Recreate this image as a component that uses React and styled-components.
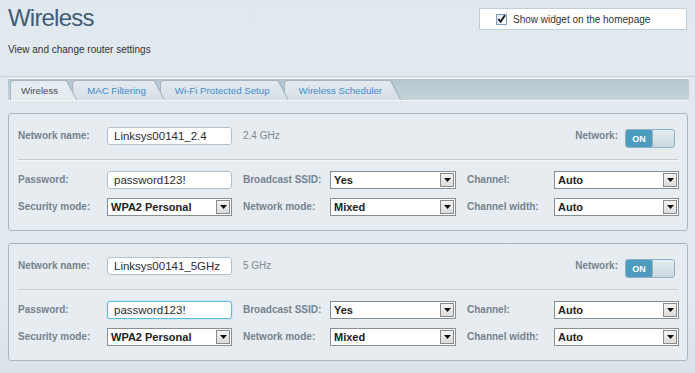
import React from "react";
import styled, { createGlobalStyle } from "styled-components";

const GlobalStyle = createGlobalStyle`
  html, body {
    margin: 0;
    padding: 0;
    background: #e1e9ef;
    font-family: "Liberation Sans", Arial, sans-serif;
  }
`;

const Page = styled.div`
  width: 695px;
  height: 373px;
  overflow: hidden;
  background: linear-gradient(180deg, #e1e9ef 0%, #e2eaef 80%, #d9e2e8 100%);
`;

const Header = styled.div`
  height: 77px;
  display: flex;
  justify-content: space-between;
  align-items: flex-start;
  padding: 0 8px;
  box-sizing: border-box;
  border-bottom: 1px solid #c7d2da;
`;

const TitleBlock = styled.div`
  padding-top: 4px;
`;

const Title = styled.h1`
  margin: 0;
  font-size: 24px;
  line-height: 28px;
  font-weight: normal;
  letter-spacing: -0.8px;
  color: #3e5c77;
`;

const Subtitle = styled.div`
  margin-top: 11px;
  font-size: 10px;
  line-height: 13px;
  color: #333;
`;

const WidgetBox = styled.label`
  margin-top: 8px;
  width: 208px;
  height: 22px;
  box-sizing: border-box;
  background: #fff;
  border: 1px solid #c3cfd8;
  display: flex;
  align-items: center;
  padding-left: 16px;
  gap: 6px;
  font-size: 10px;
  color: #333;
`;

const Check = styled.span`
  width: 11px;
  height: 11px;
  box-sizing: border-box;
  border: 1px solid #7f9db9;
  background: linear-gradient(135deg, #dfe4ea, #fff);
  display: flex;
  align-items: center;
  justify-content: center;
`;

const TabStrip = styled.div`
  margin: 1px 6px 0 8px;
  height: 23px;
  display: flex;
  align-items: flex-end;
  padding-left: 2px;
  background: linear-gradient(180deg, #b5c6d0 0%, #c6d3db 100%);
  border-top: 1px solid #f4f7f9;
  border-bottom: 1px solid #f2f6f8;
  box-sizing: border-box;
`;

const Tab = styled.div`
  position: relative;
  height: 20px;
  padding: 0 19px 0 ${(p) => (p.$active ? 11 : 15)}px;
  margin-left: ${(p) => (p.$first ? 0 : -5)}px;
  z-index: ${(p) => (p.$active ? 10 : 5 - p.$index)};
  display: flex;
  align-items: center;
  font-size: 9.7px;
  color: ${(p) => (p.$active ? "#4a4f55" : "#3f8ccb")};
  background: #a4b5c0;
  border-radius: 4px 0 0 0;
  clip-path: polygon(0 0, calc(100% - 10px) 0, 100% 100%, 0 100%);

  &::before {
    content: "";
    position: absolute;
    inset: 1px 1px 0 1px;
    border-radius: 3px 0 0 0;
    clip-path: polygon(0 0, calc(100% - 10px) 0, 100% 100%, 0 100%);
    background: ${(p) =>
      p.$active
        ? "#e5ecf0"
        : "linear-gradient(180deg, #e3eaee 0%, #d6e0e6 100%)"};
  }

  span {
    position: relative;
  }
`;

const Content = styled.div`
  padding: 12px 7px 0 8px;
  display: flex;
  flex-direction: column;
  gap: 12px;
`;

const Panel = styled.div`
  border: 1px solid #a9b6bf;
  border-radius: 3px;
  background: #e6ecf0;
  padding: 13px 9px 14px 9px;
`;

const TopRow = styled.div`
  display: flex;
  align-items: flex-start;
  height: 18px;
`;

const Label = styled.div`
  font-size: 10px;
  font-weight: bold;
  color: #75838e;
  white-space: nowrap;
  padding-left: ${(p) => p.$indent || 0}px;
  line-height: 18px;
`;

const NameLabel = styled(Label)`
  width: 89px;
`;

const Freq = styled.div`
  margin-left: 11px;
  font-size: 10px;
  line-height: 18px;
  color: #7d8a93;
`;

const Spacer = styled.div`
  flex: 1;
`;

const Toggle = styled.div`
  margin: 2px 3px 0 7px;
  width: 50px;
  height: 19px;
  display: flex;
  border-radius: 3px;
  overflow: hidden;
  box-sizing: border-box;
  border: 1px solid #8fb0c2;
`;

const ToggleOn = styled.div`
  width: 26px;
  background: #4c9cc0;
  color: #fff;
  font-size: 9px;
  font-weight: bold;
  display: flex;
  align-items: center;
  justify-content: center;
`;

const Knob = styled.div`
  flex: 1;
  background: linear-gradient(180deg, #e4ecef 0%, #c9d8de 100%);
  border-left: 1px solid #9bb0bb;
  border-radius: 2px;
`;

const Divider = styled.div`
  margin: 14px 0 11px;
  height: 1px;
  background: #c4cdd4;
  box-shadow: 0 1px 0 #f1f5f7;
`;

const Grid = styled.div`
  display: grid;
  grid-template-columns: 89px 125px 98px 126px 98px 125px;
  grid-auto-rows: 18px;
  row-gap: 9px;
  align-items: center;
`;

const TextInput = styled.div`
  height: 18px;
  box-sizing: border-box;
  background: #fff;
  border: 1px solid ${(p) => (p.$focus ? "#5bbde6" : "#b2bfc8")};
  box-shadow: ${(p) => (p.$focus ? "0 0 2px #8fd3f0" : "none")};
  border-radius: 3px;
  padding-left: 6px;
  font-size: 11.5px;
  line-height: 16px;
  color: #2b2b2b;
  white-space: nowrap;
  overflow: hidden;
`;

const Select = styled.div`
  height: 18px;
  box-sizing: border-box;
  background: #fff;
  border: 1px solid #868f96;
  display: flex;
  align-items: stretch;
  font-size: 11px;
  font-weight: bold;
  color: #222;
`;

const SelectValue = styled.div`
  flex: 1;
  padding-left: 3px;
  line-height: 16px;
  white-space: nowrap;
  overflow: hidden;
`;

const Arrow = styled.div`
  width: 14px;
  margin: 1px;
  box-sizing: border-box;
  border: 1px solid #8a8a8a;
  background: linear-gradient(180deg, #f3f3f3, #dcdcdc);
  display: flex;
  align-items: center;
  justify-content: center;
`;

function Dropdown({ value }) {
  return (
    <Select>
      <SelectValue>{value}</SelectValue>
      <Arrow>
        <svg width="7" height="4" viewBox="0 0 7 4">
          <path d="M0 0 H7 L3.5 4 Z" fill="#111" />
        </svg>
      </Arrow>
    </Select>
  );
}

function NetworkPanel({ name, band, focus }) {
  return (
    <Panel>
      <TopRow>
        <NameLabel>Network name:</NameLabel>
        <TextInput style={{ width: 125 }}>{name}</TextInput>
        <Freq>{band}</Freq>
        <Spacer />
        <Label>Network:</Label>
        <Toggle>
          <ToggleOn>ON</ToggleOn>
          <Knob />
        </Toggle>
      </TopRow>
      <Divider />
      <Grid>
        <Label>Password:</Label>
        <TextInput $focus={focus}>password123!</TextInput>
        <Label $indent={11}>Broadcast SSID:</Label>
        <Dropdown value="Yes" />
        <Label $indent={11}>Channel:</Label>
        <Dropdown value="Auto" />

        <Label>Security mode:</Label>
        <Dropdown value="WPA2 Personal" />
        <Label $indent={11}>Network mode:</Label>
        <Dropdown value="Mixed" />
        <Label $indent={11}>Channel width:</Label>
        <Dropdown value="Auto" />
      </Grid>
    </Panel>
  );
}

const tabs = ["Wireless", "MAC Filtering", "Wi-Fi Protected Setup", "Wireless Scheduler"];

export default function App() {
  return (
    <Page>
      <GlobalStyle />
      <Header>
        <TitleBlock>
          <Title>Wireless</Title>
          <Subtitle>View and change router settings</Subtitle>
        </TitleBlock>
        <WidgetBox>
          <Check>
            <svg width="10" height="10" viewBox="0 0 10 10">
              <path d="M1.5 5 L4 8 L8.8 0.8" stroke="#111" strokeWidth="2" fill="none" />
            </svg>
          </Check>
          Show widget on the homepage
        </WidgetBox>
      </Header>
      <TabStrip>
        {tabs.map((t, i) => (
          <Tab key={t} $active={i === 0} $first={i === 0} $index={i}>
            <span>{t}</span>
          </Tab>
        ))}
      </TabStrip>
      <Content>
        <NetworkPanel name="Linksys00141_2.4" band="2.4 GHz" />
        <NetworkPanel name="Linksys00141_5GHz" band="5 GHz" focus />
      </Content>
    </Page>
  );
}
